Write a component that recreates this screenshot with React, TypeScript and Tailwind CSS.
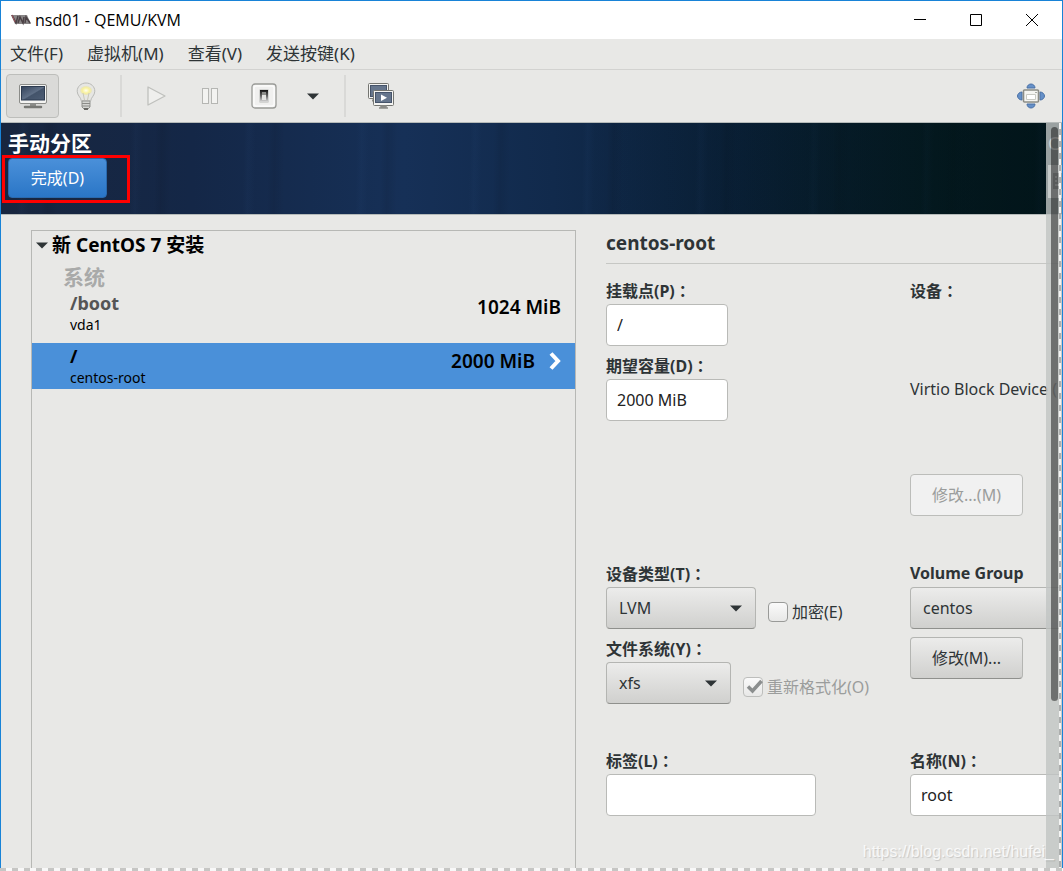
import type { ReactNode } from "react";
import clsx from "clsx";

const MENUS = ["文件(F)", "虚拟机(M)", "查看(V)", "发送按键(K)"];

function MonitorIcon() {
  return (
    <svg width="30" height="26" viewBox="0 0 30 26" aria-hidden="true">
      <defs>
        <linearGradient id="screen" x1="0" y1="0" x2="1" y2="1">
          <stop offset="0" stopColor="#33425a" />
          <stop offset="0.5" stopColor="#5f6f86" />
          <stop offset="0.55" stopColor="#43536a" />
          <stop offset="1" stopColor="#4d5d74" />
        </linearGradient>
      </defs>
      <rect x="1.5" y="1.5" width="27" height="19" rx="1.5" fill="#f4f4f2" stroke="#8b8c89" />
      <rect x="3.5" y="3.5" width="23" height="13.5" fill="url(#screen)" stroke="#2d3b50" />
      <path d="M12 21h6v2h-6z" fill="#8b8c89" />
      <path d="M7 24h16" stroke="#777874" strokeWidth="2.5" strokeLinecap="round" />
    </svg>
  );
}

function BulbIcon() {
  return (
    <svg width="20" height="28" viewBox="0 0 20 28" aria-hidden="true">
      <defs>
        <radialGradient id="glow" cx="0.5" cy="0.5" r="0.5">
          <stop offset="0" stopColor="#fffef0" />
          <stop offset="0.6" stopColor="#f8f19c" />
          <stop offset="1" stopColor="#e6e3c4" />
        </radialGradient>
      </defs>
      <path
        d="M10 1C5 1 1.2 4.600 1.200 9.200c0 4.300 3.600 5.800 4.200 9.800h9.200c.6-4 4.200-5.500 4.200-9.800C18.800 4.600 15 1 10 1z"
        fill="#e6e6e3"
        stroke="#b9bab7"
      />
      <ellipse cx="10" cy="8.500" rx="6" ry="4.500" fill="url(#glow)" />
      <path d="M7 11l1.500 7M13 11l-1.500 7" fill="none" stroke="#c9c8b8" />
      <path d="M6 19h8v6l-2 2H8l-2-2z" fill="#d5d6d3" stroke="#92938f" />
      <path d="M6 21.500h8M6 24h8" stroke="#8a8b87" />
      <path d="M8 27h4" stroke="#4c4d49" strokeWidth="1.500" />
    </svg>
  );
}

function PlayIcon() {
  return (
    <svg width="20" height="20" viewBox="0 0 20 20" aria-hidden="true">
      <path d="M2 1v18l17-9z" fill="#efefed" stroke="#bfc0bd" strokeWidth="1.300" strokeLinejoin="round" />
    </svg>
  );
}

function PauseIcon() {
  return (
    <svg width="18" height="18" viewBox="0 0 18 18" aria-hidden="true">
      <rect x="1.500" y="1.500" width="6" height="15" fill="#f3f3f1" stroke="#b5b6b3" />
      <rect x="10.500" y="1.500" width="6" height="15" fill="#f3f3f1" stroke="#b5b6b3" />
    </svg>
  );
}

function PowerIcon() {
  return (
    <svg width="26" height="28" viewBox="0 0 26 28" aria-hidden="true">
      <defs>
        <linearGradient id="rocker" x1="0" y1="0" x2="0" y2="1">
          <stop offset="0" stopColor="#111" />
          <stop offset="0.5" stopColor="#666" />
          <stop offset="1" stopColor="#ddd" />
        </linearGradient>
      </defs>
      <rect x="1" y="2" width="24" height="24" rx="3" fill="#f5f5f4" stroke="#999a97" strokeWidth="1.300" />
      <rect x="3" y="4" width="20" height="20" rx="2" fill="#f0f0ef" stroke="#fff" />
      <path d="M8.500 7.500h9v13h-9z" fill="#b9bab7" />
      <path d="M9 8h8v12H9z" fill="url(#rocker)" />
      <path d="M11 10h4v8h-4z" fill="#e4e4e2" />
      <path d="M11 10h4v3h-4z" fill="#8d8e8b" />
    </svg>
  );
}

function SnapshotsIcon() {
  return (
    <svg width="28" height="28" viewBox="0 0 28 28" aria-hidden="true">
      <rect x="1.500" y="1.500" width="20" height="15" rx="1" fill="#f4f4f2" stroke="#747571" />
      <rect x="3.500" y="3.500" width="16" height="11" fill="#66768d" stroke="#46546a" />
      <path d="M5 18.500h6" stroke="#888985" strokeWidth="2" />
      <rect x="6.500" y="8.500" width="20" height="15" rx="1" fill="#f4f4f2" stroke="#747571" />
      <rect x="8.500" y="10.500" width="16" height="10" fill="#66768d" stroke="#46546a" />
      <path d="M14 12.500v6.500l6-3.200z" fill="#fff" />
      <path d="M14 24h5v1h-5zM12 26h9" fill="#888985" stroke="#8a8b87" strokeWidth="1.500" />
    </svg>
  );
}

function FullscreenIcon() {
  return (
    <svg width="30" height="28" viewBox="0 0 30 28" aria-hidden="true">
      <g fill="#6590c8" stroke="#4a70a5">
        <path d="M11 6c0-2.500 2-4 4-4s4 1.500 4 4z" />
        <path d="M11 22c0 2.500 2 4 4 4s4-1.500 4-4z" />
        <path d="M6 10c-2.500 0-4.500 2-4.500 4S3.500 18 6 18z" />
        <path d="M24 10c2.500 0 4.500 2 4.500 4S26.500 18 24 18z" />
      </g>
      <rect x="7.500" y="8" width="15" height="12" rx="1" fill="#f5f5f2" stroke="#8c8d87" strokeWidth="1.600" />
      <path d="M10.500 12.500h9v5h-9z" fill="#fff" stroke="#c9cac4" />
      <path d="M19 10.500h2" stroke="#aaaba5" />
    </svg>
  );
}

function Caret({ className }: { className?: string }) {
  return (
    <svg width="12" height="7" viewBox="0 0 12 7" aria-hidden="true" className={clsx("shrink-0", className)}>
      <path d="M0 .5h12L6 6.500z" fill="#2e3436" />
    </svg>
  );
}

function ToolButton({ label, className, children }: { label: string; className?: string; children: ReactNode }) {
  return (
    <button
      type="button"
      aria-label={label}
      className={clsx("flex h-11 items-center justify-center rounded", className)}
    >
      {children}
    </button>
  );
}

// the TC face centres the full-width colon in its cell
function Colon() {
  return <span className="font-['Noto_Sans_CJK_TC',sans-serif]">：</span>;
}

function FieldLabel({ htmlFor, text, colon = true }: { htmlFor: string; text: string; colon?: boolean }) {
  return (
    <label htmlFor={htmlFor} className="block h-7 text-base leading-7 font-bold whitespace-nowrap">
      {text}
      {colon && <Colon />}
    </label>
  );
}

function TextField({ id, label, value, className }: { id: string; label: string; value: string; className: string }) {
  return (
    <div>
      <FieldLabel htmlFor={id} text={label} />
      <input
        id={id}
        type="text"
        defaultValue={value}
        className={clsx(
          "block h-[42px] rounded border border-[#b9bab7] bg-white px-2.5 text-base text-[#222]",
          className,
        )}
      />
    </div>
  );
}

type SelectProps = { id: string; label: string; value: string; className: string; colon?: boolean };

function SelectField({ id, label, value, className, colon }: SelectProps) {
  return (
    <div>
      <FieldLabel htmlFor={id} text={label} colon={colon} />
      <div className={clsx("relative", className)}>
        <select
          id={id}
          defaultValue={value}
          className="block h-[42px] w-full appearance-none rounded border border-[#b4b5b2] border-b-[#8f908d] bg-linear-to-b from-[#ececeb] to-[#d0d0ce] px-3 text-base"
        >
          <option>{value}</option>
        </select>
        <Caret className="pointer-events-none absolute top-[18px] right-3.5" />
      </div>
    </div>
  );
}

function CheckField({ label, checked, disabled }: { label: string; checked?: boolean; disabled?: boolean }) {
  return (
    <label className={clsx("flex h-[34px] items-center gap-1 text-base whitespace-nowrap", disabled && "text-[#9b9d9c]")}>
      <span className="relative flex">
        <input
          type="checkbox"
          defaultChecked={checked}
          disabled={disabled}
          className={clsx(
            "size-5 appearance-none rounded border bg-linear-to-b from-[#fafafa] to-[#e8e8e7]",
            disabled ? "border-[#bdbebc]" : "border-[#999a98]",
          )}
        />
        {checked && (
          <svg width="20" height="20" viewBox="0 0 20 20" aria-hidden="true" className="absolute inset-0">
            <path d="M5 9.500l4.500 4.500 9-10" fill="none" stroke="#8b8e8e" strokeWidth="3.500" />
          </svg>
        )}
      </span>
      {label}
    </label>
  );
}

function TitleBar() {
  return (
    <header className="flex h-[38px] items-center bg-white pr-0.5 pl-2.5 text-black">
      <svg width="20" height="14" viewBox="0 0 20 14" aria-hidden="true">
        <path d="M0 2h16l4 9H4z" fill="#888586" />
        <path d="M1 2l4 8 2-7M7 10l2-6 3 6 1-6M14 10l1-6 4 6" fill="none" stroke="#4b4145" strokeWidth="1.500" />
        <path d="M1 2l3 7" stroke="#a2555e" />
      </svg>
      <h1 className="ml-1 flex-1 font-['Open_Sans',sans-serif] text-base">nsd01 - QEMU/KVM</h1>
      <button type="button" aria-label="最小化" className="flex h-full w-14 items-center justify-center">
        <svg width="12" height="12" viewBox="0 0 12 12" stroke="#000">
          <path d="M0 5.500h12" />
        </svg>
      </button>
      <button type="button" aria-label="最大化" className="flex h-full w-14 items-center justify-center">
        <svg width="12" height="12" viewBox="0 0 12 12" fill="none" stroke="#000">
          <path d="M.5.5h11v11H.5z" />
        </svg>
      </button>
      <button type="button" aria-label="关闭" className="flex h-full w-14 items-center justify-center">
        <svg width="12" height="12" viewBox="0 0 12 12" stroke="#000">
          <path d="M0 0l12 12M12 0L0 12" />
        </svg>
      </button>
    </header>
  );
}

function Toolbar() {
  return (
    <div className="flex h-[53px] items-center border-b border-[#b5bab9] px-[5px]">
      <ToolButton label="控制台" className="w-[53px] border border-[#bdbebb] bg-[#dadad8]">
        <MonitorIcon />
      </ToolButton>
      <ToolButton label="详情" className="w-[53px]">
        <BulbIcon />
      </ToolButton>
      <span className="ml-2 h-[42px] w-0.5 bg-[#d9d9d7]" />
      <ToolButton label="运行" className="ml-2 w-[52px]">
        <PlayIcon />
      </ToolButton>
      <ToolButton label="暂停" className="w-14">
        <PauseIcon />
      </ToolButton>
      <ToolButton label="关机" className="w-[52px]">
        <PowerIcon />
      </ToolButton>
      <ToolButton label="关机选项" className="w-[46px]">
        <Caret />
      </ToolButton>
      <span className="ml-2 h-[42px] w-0.5 bg-[#d9d9d7]" />
      <ToolButton label="快照" className="ml-2 w-[53px]">
        <SnapshotsIcon />
      </ToolButton>
      <ToolButton label="全屏" className="ml-auto w-[52px]">
        <FullscreenIcon />
      </ToolButton>
    </div>
  );
}

function Banner() {
  return (
    <div className="relative flex h-[92px] shrink-0 justify-between overflow-hidden border-b border-[#b5bab9] bg-[linear-gradient(90deg,transparent_55%,rgba(2,22,28,0.5)_100%),repeating-linear-gradient(91deg,transparent_0_17px,rgba(70,120,190,0.04)_22px,transparent_29px_41px,rgba(0,0,0,0.07)_48px,transparent_58px_113px),linear-gradient(90deg,#18263f_0%,#142747_18%,#163057_38%,#112a4c_52%,#0a2038_70%,#04191f_88%,#011317_100%)] pl-[7px]">
      <div>
        <h2 className="mt-1.5 text-[21px] leading-7 font-bold text-white">手动分区</h2>
        <button
          type="button"
          className="mt-px block h-10 w-[99px] rounded-sm border border-[#2a69ad] bg-linear-to-b from-[#4a90d9] to-[#2a76c6] text-base text-white"
        >
          完成(D)
        </button>
      </div>
      <div className="w-3.5 overflow-hidden">
        <p className="mt-1.5 text-lg leading-7 text-white">C</p>
        <svg width="14" height="33" viewBox="0 0 14 33" aria-hidden="true" className="mt-2 bg-[#d8dbda]">
          <path d="M5 8h12v16H5z" fill="#2e3436" />
          <path d="M7 11h2v2H7zM11 11h2v2h-2zM7 15h2v2H7zM11 15h2v2h-2zM7 19h6v2H7z" fill="#d8dbda" />
        </svg>
      </div>
      {/* highlight around the done button */}
      <div className="pointer-events-none absolute top-8 left-px h-12 w-32 border-3 border-[#fe0000]" />
    </div>
  );
}

function PartitionTree() {
  return (
    <section className="min-w-0 flex-1 border border-b-0 border-[#b7b8b5] text-black">
      <h3 className="flex h-7 items-center gap-1 pl-1 text-[19px] font-bold">
        <Caret />
        新 CentOS 7 安装
      </h3>
      <p className="mt-1 h-7 pl-[31px] text-[21px] leading-7 font-bold text-[#a9aaa9]">系统</p>
      <ul>
        <li className="flex h-[52px] items-start justify-between pr-3.5 pl-[38px]">
          <div>
            <p className="text-lg leading-6 font-bold text-[#555]">/boot</p>
            <p className="text-sm leading-5">vda1</p>
          </div>
          <p className="mt-1 text-[19px] leading-6 font-semibold">1024 MiB</p>
        </li>
        <li className="flex h-[46px] items-center justify-between bg-[#4a90d9] pr-3.5 pl-[38px]">
          <div>
            <p className="text-lg leading-6 font-bold">/</p>
            <p className="text-sm leading-5">centos-root</p>
          </div>
          <div className="mb-2.5 flex items-center gap-3.5">
            <p className="text-[19px] leading-6 font-semibold">2000 MiB</p>
            <svg width="12" height="18" viewBox="0 0 12 18" aria-hidden="true">
              <path d="M2 1.500l7 7.500-7 7.500" fill="none" stroke="#fff" strokeWidth="4" />
            </svg>
          </div>
        </li>
      </ul>
    </section>
  );
}

function DetailsForm() {
  return (
    <form className="w-[456px] shrink-0 overflow-hidden">
      <h3 className="h-[34px] border-b border-[#c6c7c4] text-[19px] leading-[26px] font-bold">centos-root</h3>

      <div className="mt-3 flex">
        <div className="flex w-[304px] shrink-0 flex-col gap-[5px]">
          <TextField id="mount" label="挂载点(P)" value="/" className="w-[122px]" />
          <TextField id="capacity" label="期望容量(D)" value="2000 MiB" className="w-[122px]" />
        </div>
        <div className="whitespace-nowrap">
          <p className="text-base leading-7 font-bold">
            设备
            <Colon />
          </p>
          <p className="mt-[74px] text-base leading-5">Virtio Block Device (</p>
          <button
            type="button"
            disabled
            className="mt-[75px] block h-[42px] w-[113px] rounded border border-[#bcbdba] bg-[#f1f1f1] text-base text-[#9b9d9c]"
          >
            修改...(M)
          </button>
        </div>
      </div>

      <div className="mt-[43px] flex">
        <div className="flex w-[304px] shrink-0 flex-col gap-[5px]">
          <div className="flex items-end gap-3">
            <SelectField id="device-type" label="设备类型(T)" value="LVM" className="w-[150px]" />
            <CheckField label="加密(E)" />
          </div>
          <div className="flex items-end gap-3">
            <SelectField id="filesystem" label="文件系统(Y)" value="xfs" className="w-[125px]" />
            <CheckField label="重新格式化(O)" checked disabled />
          </div>
        </div>
        <div>
          <SelectField id="volume-group" label="Volume Group" value="centos" className="w-[200px]" colon={false} />
          <button
            type="button"
            className="mt-2 block h-[42px] w-[113px] rounded border border-[#b4b5b2] border-b-[#8f908d] bg-linear-to-b from-[#ececeb] to-[#d0d0ce] text-base"
          >
            修改(M)...
          </button>
        </div>
      </div>

      <div className="mt-[42px] flex">
        <div className="w-[304px] shrink-0">
          <TextField id="label" label="标签(L)" value="" className="w-[210px]" />
        </div>
        <TextField id="name" label="名称(N)" value="root" className="w-[200px]" />
      </div>
    </form>
  );
}

export default function App() {
  return (
    <div className="flex min-h-screen flex-col bg-[#e8e8e6] font-['Noto_Sans','Noto_Sans_CJK_SC',sans-serif] text-[#2e3436]">
      <div className="flex flex-1 flex-col border-x border-t border-[#1883d7]">
        <TitleBar />
        <nav className="flex h-[31px] items-center gap-6 border-b border-[#d2d2d0] px-[9px] text-[17px]">
          {MENUS.map((name) => (
            <button key={name} type="button">
              {name}
            </button>
          ))}
        </nav>
        <Toolbar />

        <main className="relative flex flex-1 flex-col overflow-hidden">
          <Banner />
          <div className="flex flex-1 gap-[30px] pt-[15px] pl-[30px]">
            <PartitionTree />
            <DetailsForm />
          </div>

          {/* vertical scrollbar floats over the guest display */}
          <div className="absolute inset-y-0 right-0 flex w-4 bg-[#c0c4c3]/80">
            <div className="mt-1 ml-[5px] h-[77%] w-[7px] rounded-full bg-black/45" />
            <div className="ml-px w-0.5 bg-[repeating-linear-gradient(180deg,#f4f4f3_0_6px,#adafae_6px_12px)]" />
          </div>
          <p className="absolute right-2 bottom-1 font-['Liberation_Sans',sans-serif] text-base text-white/80 [text-shadow:1px_1px_1px_rgba(0,0,0,0.15)]">
            https://blog.csdn.net/hufei_
          </p>
        </main>
      </div>
      <div className="h-[3px] bg-[repeating-linear-gradient(90deg,#c6c6c4_0_6px,#f8f8f8_6px_12px)]" />
    </div>
  );
}
